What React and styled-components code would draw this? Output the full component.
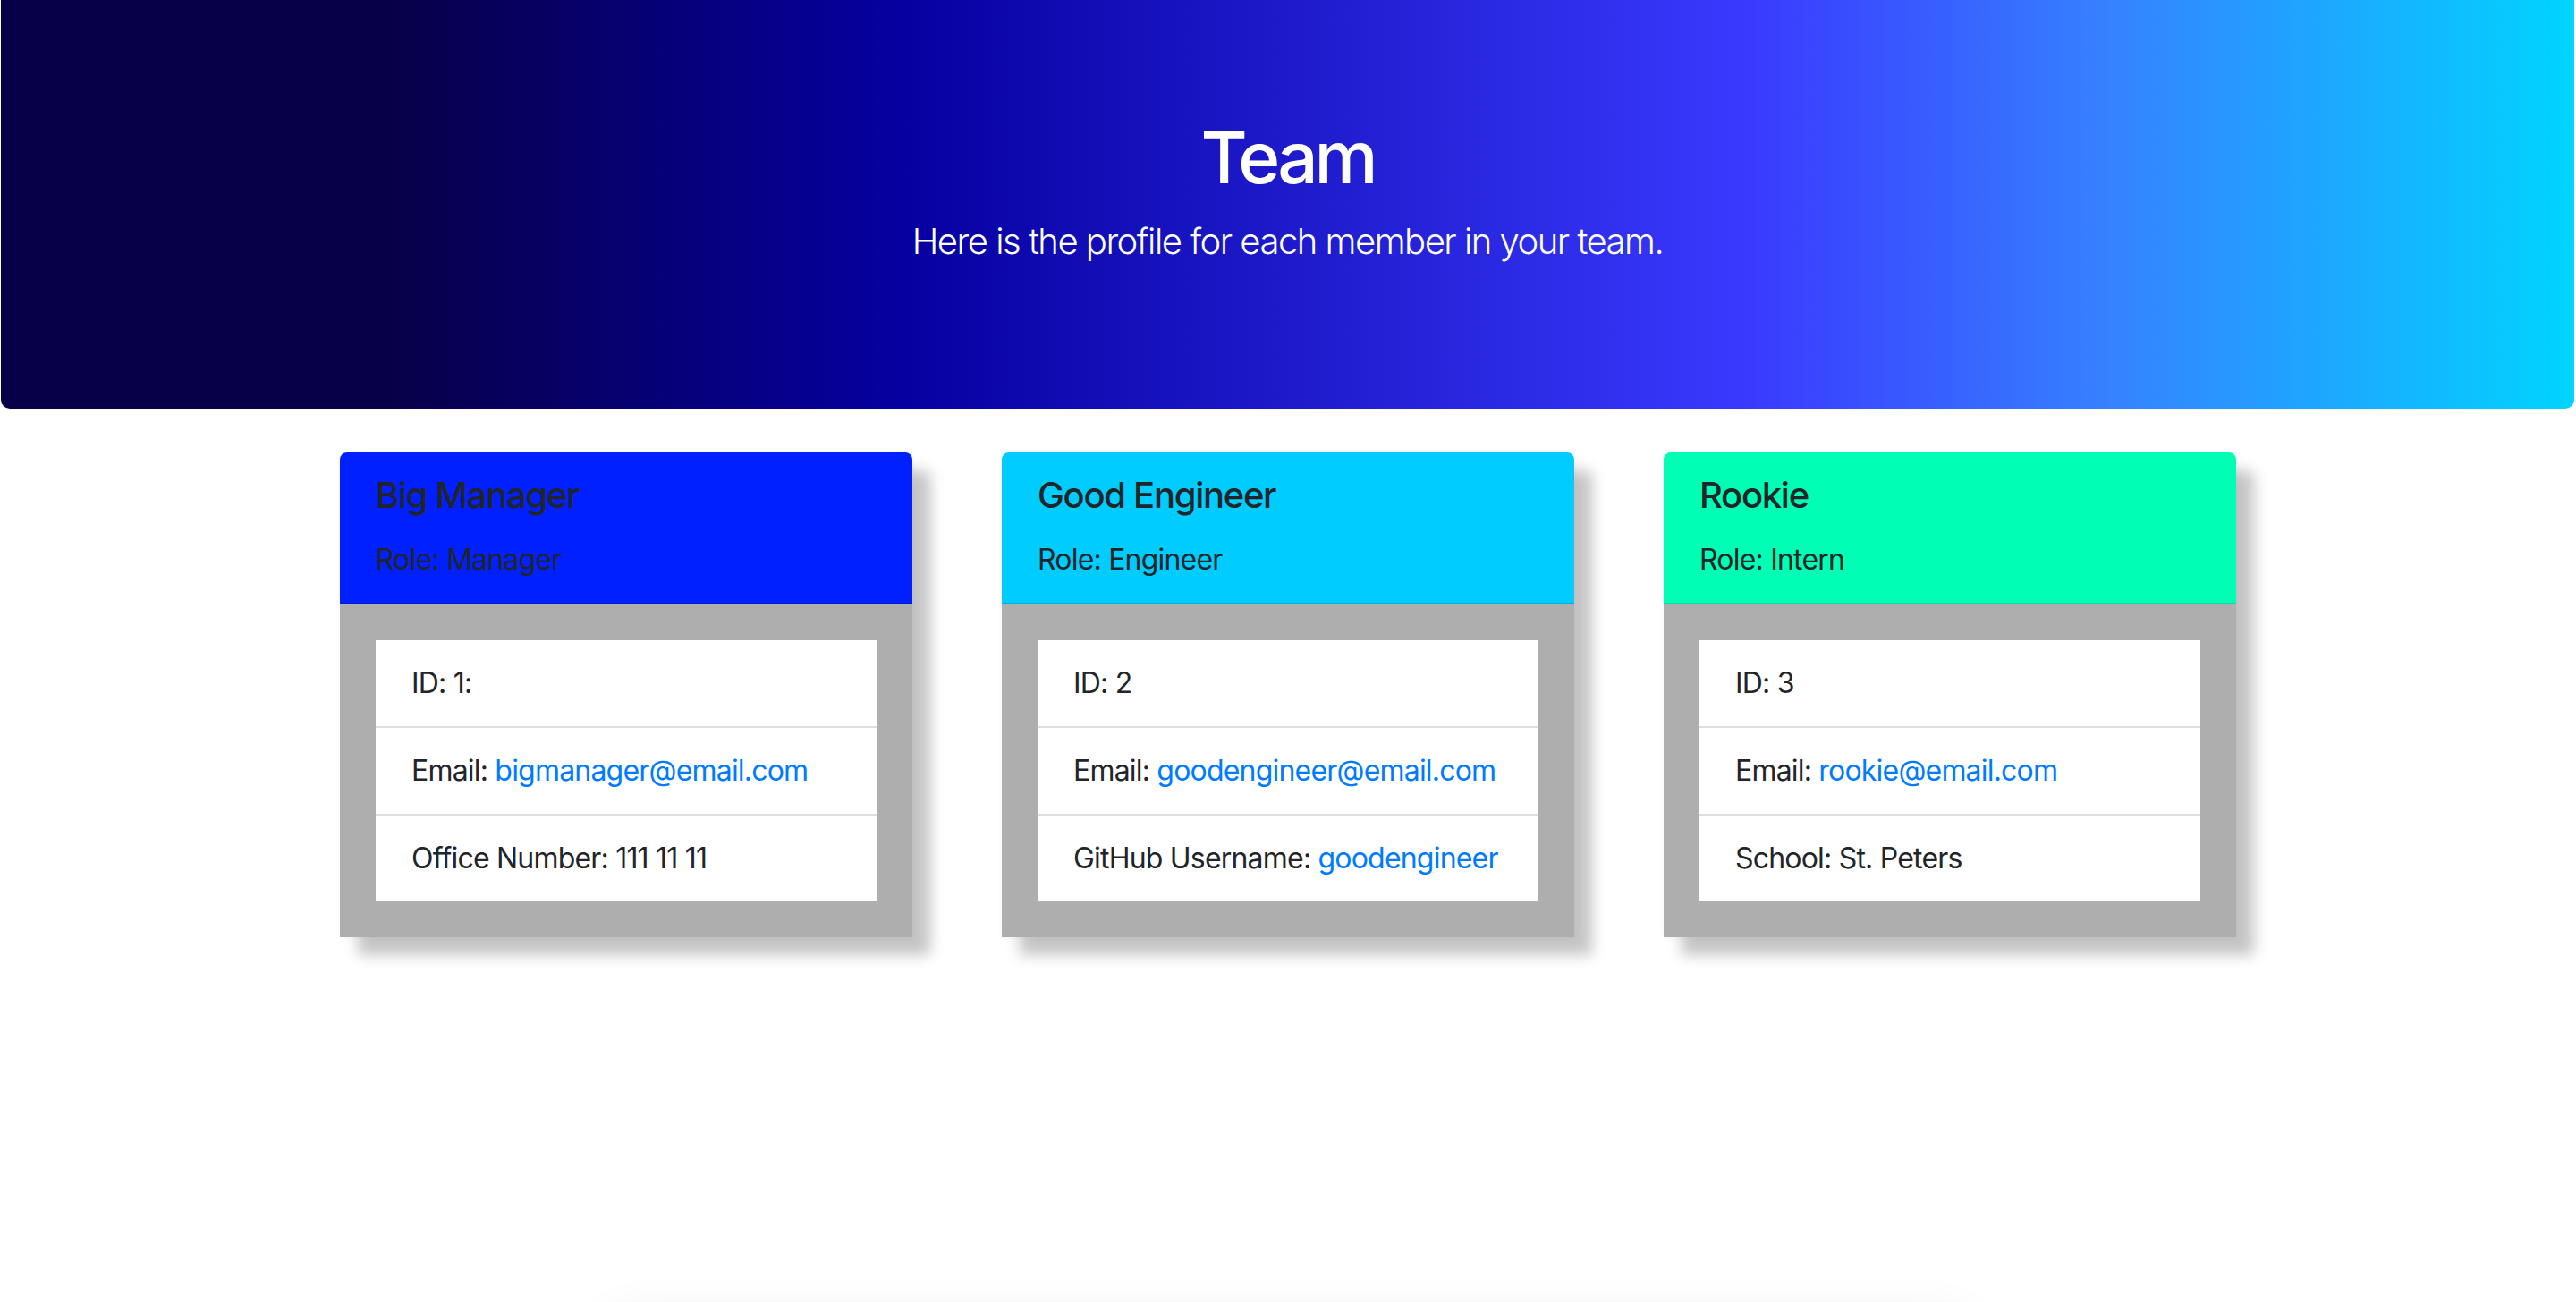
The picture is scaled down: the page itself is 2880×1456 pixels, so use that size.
import React from 'react';
import styled, { createGlobalStyle } from 'styled-components';

const GlobalStyle = createGlobalStyle`
  html, body {
    margin: 0;
    padding: 0;
    background: #fff;
    color: #212529;
    font-family: Inter, "Noto Sans", "Liberation Sans", sans-serif;
  }
`;

const Page = styled.div`
  height: 100vh;
  overflow: hidden;
`;

const Hero = styled.header`
  margin: 0 2px 0 1px;
  padding: 128px 64px 125px;
  border-radius: 0 0 10px 10px;
  background: linear-gradient(
    90deg,
    #070048 0%,
    #070048 15%,
    #0600a0 35%,
    #3a3aff 68%,
    #3682ff 82%,
    #00d4ff 100%
  );
  color: #fff;
  text-align: center;
`;

const Title = styled.h1`
  margin: 0 0 16px;
  font-size: 80px;
  line-height: 96px;
  font-weight: 500;
  letter-spacing: -4px;
`;

const Lead = styled.p`
  margin: 0 0 32px;
  font-size: 40px;
  line-height: 60px;
  font-weight: 300;
  letter-spacing: -1.5px;
`;

const CardRow = styled.main`
  display: flex;
  align-items: flex-start;
  justify-content: center;
  gap: 100px;
  margin-top: 49px;
`;

const Card = styled.section`
  width: 640px;
  border-radius: 8px 8px 0 0;
  box-shadow: 20px 20px 16px rgba(0, 0, 0, 0.23), 0 0 6px rgba(0, 0, 0, 0.05);
`;

const CardHeader = styled.div`
  padding: 24px 40px;
  background: ${(p) => p.$color};
  border-bottom: 2px solid rgba(0, 0, 0, 0.125);
  border-radius: 8px 8px 0 0;
`;

const Name = styled.h2`
  margin: 0 0 24px;
  font-size: 40px;
  line-height: 48px;
  font-weight: 500;
  letter-spacing: -1.3px;
`;

const Role = styled.p`
  margin: 0;
  font-size: 32px;
  line-height: 48px;
  letter-spacing: -0.8px;
`;

const CardBody = styled.div`
  padding: 40px;
  background: #aeaeae;
`;

const List = styled.ul`
  margin: 0;
  padding: 0;
  list-style: none;
  background: #fff;
`;

const Item = styled.li`
  padding: 24px 40px;
  font-size: 32px;
  line-height: 48px;
  letter-spacing: -0.8px;
  white-space: nowrap;
  & + & {
    border-top: 2px solid #dfdfdf;
  }
`;

const Link = styled.a`
  color: #007bff;
  text-decoration: none;
`;

const Footer = styled.footer`
  width: 1560px;
  height: 200px;
  margin: 422px auto 0;
  border-radius: 60px;
  box-shadow: 0 0 50px rgba(0, 0, 0, 0.08);
`;

const team = [
  {
    name: 'Big Manager',
    role: 'Manager',
    color: '#0020ff',
    id: '1:',
    email: 'bigmanager@email.com',
    extra: { label: 'Office Number', value: '111 11 11' },
  },
  {
    name: 'Good Engineer',
    role: 'Engineer',
    color: '#00ccff',
    id: '2',
    email: 'goodengineer@email.com',
    extra: { label: 'GitHub Username', value: 'goodengineer', link: true },
  },
  {
    name: 'Rookie',
    role: 'Intern',
    color: '#00ffb4',
    id: '3',
    email: 'rookie@email.com',
    extra: { label: 'School', value: 'St. Peters' },
  },
];

const MemberCard = ({ member }) => (
  <Card>
    <CardHeader $color={member.color}>
      <Name>{member.name}</Name>
      <Role>Role: {member.role}</Role>
    </CardHeader>
    <CardBody>
      <List>
        <Item>ID: {member.id}</Item>
        <Item>
          Email: <Link href={`mailto:${member.email}`}>{member.email}</Link>
        </Item>
        <Item>
          {member.extra.label}:{' '}
          {member.extra.link ? (
            <Link href={`https://github.com/${member.extra.value}`}>{member.extra.value}</Link>
          ) : (
            member.extra.value
          )}
        </Item>
      </List>
    </CardBody>
  </Card>
);

const App = () => {
  return (
    <Page>
      <GlobalStyle />
      <Hero>
        <Title>Team</Title>
        <Lead>Here is the profile for each member in your team.</Lead>
      </Hero>
      <CardRow>
        {team.map((m) => (
          <MemberCard key={m.name} member={m} />
        ))}
      </CardRow>
      <Footer />
    </Page>
  );
};

export default App;
